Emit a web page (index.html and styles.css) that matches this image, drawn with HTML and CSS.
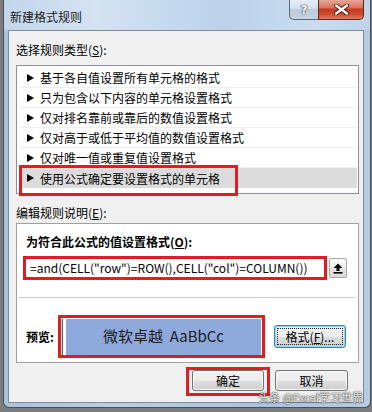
FILE: index.html
```html
<!DOCTYPE html>
<html>
	<head>
		<meta charset="utf-8">
		<title>新建格式规则</title>
		<link rel="stylesheet" href="styles.css">
	</head>
	<body>
		<div class="dialog">
			<header class="titlebar">
				<span class="caption">新建格式规则</span>
				<div class="caption-btns">
					<span class="cap-btn help">?</span>
					<span class="cap-btn close">
						<svg width="15" height="11" viewBox="0 0 15 11">
							<path d="M2 1.5 L13 9.5 M13 1.5 L2 9.5" stroke="#4a2219" stroke-width="4.2" stroke-linecap="round"/>
							<path d="M2 1.5 L13 9.5 M13 1.5 L2 9.5" stroke="#fff" stroke-width="2.2" stroke-linecap="round"/>
						</svg>
					</span>
				</div>
			</header>
			<main class="client">
				<div class="label">选择规则类型(<u>S</u>):</div>
				<ul class="rule-list">
					<li><i class="arrow"></i>基于各自值设置所有单元格的格式</li>
					<li><i class="arrow"></i>只为包含以下内容的单元格设置格式</li>
					<li><i class="arrow"></i>仅对排名靠前或靠后的数值设置格式</li>
					<li><i class="arrow"></i>仅对高于或低于平均值的数值设置格式</li>
					<li><i class="arrow"></i>仅对唯一值或重复值设置格式</li>
					<li class="selected"><i class="arrow"></i>使用公式确定要设置格式的单元格</li>
				</ul>
				<div class="label label-edit">编辑规则说明(<u>E</u>):</div>
				<section class="edit-box">
					<div class="bold-label">为符合此公式的值设置格式(<u>O</u>):</div>
					<div class="formula-row">
						<div class="formula">=and(CELL("row")=ROW(),CELL("col")=COLUMN())</div>
						<span class="ref-btn">
							<svg width="10" height="11" viewBox="0 0 10 11">
								<path d="M5 0.5 L9.5 5 H6.5 V8 H3.5 V5 H0.5 Z" fill="#000"/>
								<rect x="0.5" y="9" width="9" height="1.6" fill="#000"/>
							</svg>
						</span>
					</div>
					<hr class="sep">
					<div class="preview-row">
						<span class="bold-label preview-label">预览:</span>
						<div class="preview-mark">
							<div class="preview">
								<div class="swatch">微软卓越&nbsp; AaBbCc</div>
							</div>
						</div>
						<button class="btn btn-focus"><span class="focus-ring">格式(<u>F</u>)...</span></button>
					</div>
				</section>
				<div class="actions">
					<span class="ok-mark"><button class="btn">确定</button></span>
					<button class="btn btn-cancel">取消</button>
				</div>
				<span class="watermark">头条 @Excel学习世界</span>
			</main>
		</div>
	</body>
</html>
```
FILE: styles.css
```css
* {
	margin: 0;
	padding: 0;
	box-sizing: border-box;
}
body {
	width: 372px;
	height: 412px;
	overflow: hidden;
	background: #7c7c7c;
	font-family: "Noto Sans CJK SC", "Noto Sans", sans-serif;
	font-size: 12px;
	color: #000;
}
.dialog {
	margin-left: 3px;
	width: 368px;
	height: 408px;
	border: 1px solid #44505e;
	border-top: none;
	border-radius: 0 0 6px 6px;
	background: linear-gradient(90deg, #a9c2dc, #b9cfe6 30%, #aac3de 70%, #b4cbe3);
}
.titlebar {
	height: 30px;
	display: flex;
	align-items: flex-start;
	padding: 0 6px 0 6px;
	background: linear-gradient(90deg, #c2d6ec, #d5e3f2 25%, #c6d9ee 45%, #bcd2ea 60%, #cadcef 85%, #bfd4ea);
}
.caption {
	padding-top: 9px;
	line-height: 16px;
	color: #1b1b1b;
}
.caption-btns {
	margin-left: auto;
	display: flex;
}
.cap-btn {
	height: 20px;
	display: flex;
	align-items: center;
	justify-content: center;
	border: 1px solid #5a6b7e;
	border-top: none;
}
.help {
	width: 29px;
	border-radius: 0 0 0 5px;
	border-right: none;
	background: linear-gradient(#e6eef6, #d3e0ed 45%, #bccbdc 50%, #c5d4e4);
	font-family: "DejaVu Sans", sans-serif;
	font-weight: bold;
	font-size: 13px;
	color: #fff;
	text-shadow: 0 0 1px #334, 0 0 1px #334, 0 0 1px #334;
}
.close {
	width: 46px;
	border-color: #5b2a1f;
	border-radius: 0 0 5px 0;
	background: linear-gradient(#e9a797, #d9735d 40%, #c4381f 50%, #cd4c30 75%, #dc7c5c);
}
.client {
	position: relative;
	margin: 0 6px 0 4px;
	height: 373px;
	border: 1px solid #7e8b9b;
	background: #f0f0f0;
	padding: 0 4px 0 7px;
}
.label {
	padding-top: 11px;
	line-height: 16px;
}
.label-edit {
	padding-top: 0;
	margin-top: 11px;
}
u {
	text-decoration: underline;
	text-underline-offset: 1px;
}
.rule-list {
	list-style: none;
	margin-top: 7px;
	height: 129px;
	border: 1px solid #8c8f96;
	background: #fff;
	padding: 2px 1px 5px 3px;
}
.rule-list li {
	position: relative;
	height: 20px;
	line-height: 19px;
	padding-left: 7px;
	display: flex;
	align-items: center;
	border-bottom: 1px solid #ededed;
}
.rule-list li.selected {
	background: #dcdcdc;
	border-bottom: none;
}
.rule-list li.selected::after {
	content: "";
	position: absolute;
	left: -1px;
	top: -3px;
	width: 213px;
	height: 25px;
	border: 3px solid #e31b23;
}
.arrow {
	width: 0;
	height: 0;
	border-left: 7px solid #000;
	border-top: 4px solid transparent;
	border-bottom: 4px solid transparent;
	margin-right: 6px;
}
.edit-box {
	margin-top: 2px;
	height: 140px;
	border: 1px solid #a0a0a0;
	background: #fff;
	padding: 10px 1px 0 1px;
}
.bold-label {
	font-weight: bold;
	line-height: 16px;
	padding-left: 8px;
}
.formula-row {
	margin-top: 6px;
	padding-left: 5px;
	display: flex;
	align-items: center;
}
.formula {
	width: 304px;
	height: 24px;
	border: 3px solid #e31b23;
	padding-left: 4px;
	font-size: 12px;
	line-height: 17px;
	white-space: nowrap;
	overflow: hidden;
}
.ref-btn {
	margin-left: 2px;
	width: 18px;
	height: 20px;
	border: 1px solid #a9a9a9;
	border-radius: 2px;
	background: linear-gradient(#fdfdfd, #efefef 50%, #e4e4e4 51%, #dcdcdc);
	display: flex;
	align-items: center;
	justify-content: center;
}
.sep {
	margin: 17px 1px 0 0;
	border: none;
	border-top: 1px solid #c8c8c8;
}
.preview-row {
	margin-top: 17px;
	display: flex;
	align-items: center;
}
.preview-label {
	width: 40px;
}
.preview-mark {
	width: 207px;
	height: 43px;
	border: 3px solid #e31b23;
	padding: 1px 0 0 1px;
}
.preview {
	height: 36px;
	border-left: 1px solid #5e5e5e;
	padding-left: 3px;
	background: #fff;
}
.swatch {
	width: 195px;
	height: 36px;
	background: #8eaadc;
	text-align: center;
	line-height: 34px;
	font-size: 15px;
	color: #1c1c1c;
}
.btn {
	font-family: "Noto Sans CJK SC", "Noto Sans", sans-serif;
	font-size: 12px;
	color: #000;
	height: 21px;
	width: 72px;
	border: 1px solid #707070;
	border-radius: 3px;
	background: linear-gradient(#f2f2f2, #ebebeb 50%, #dddddd 51%, #cfcfcf);
	box-shadow: inset 0 0 0 1px #fbfbfb;
	line-height: 17px;
}
.btn-focus {
	margin-left: 9px;
	height: 23px;
	border-color: #3c7fb1;
	box-shadow: inset 0 0 0 1px #91d6f8;
	padding: 2px;
}
.focus-ring {
	display: block;
	height: 17px;
	border: 1px dotted #222;
	line-height: 15px;
}
.actions {
	margin-top: 4px;
	display: flex;
	justify-content: flex-end;
	align-items: flex-start;
	padding-right: 11px;
}
.ok-mark {
	display: block;
	border: 3px solid #e31b23;
	padding: 0 3px 2px 3px;
}
.btn-cancel {
	margin: 3px 0 0 5px;
	width: 73px;
}
.watermark {
	position: absolute;
	right: 0;
	bottom: 0;
	font-size: 11px;
	line-height: 10px;
	color: rgba(255, 255, 255, 0.9);
	text-shadow: 0 0 2px #333, 0 0 1px #333;
	white-space: nowrap;
}
```
